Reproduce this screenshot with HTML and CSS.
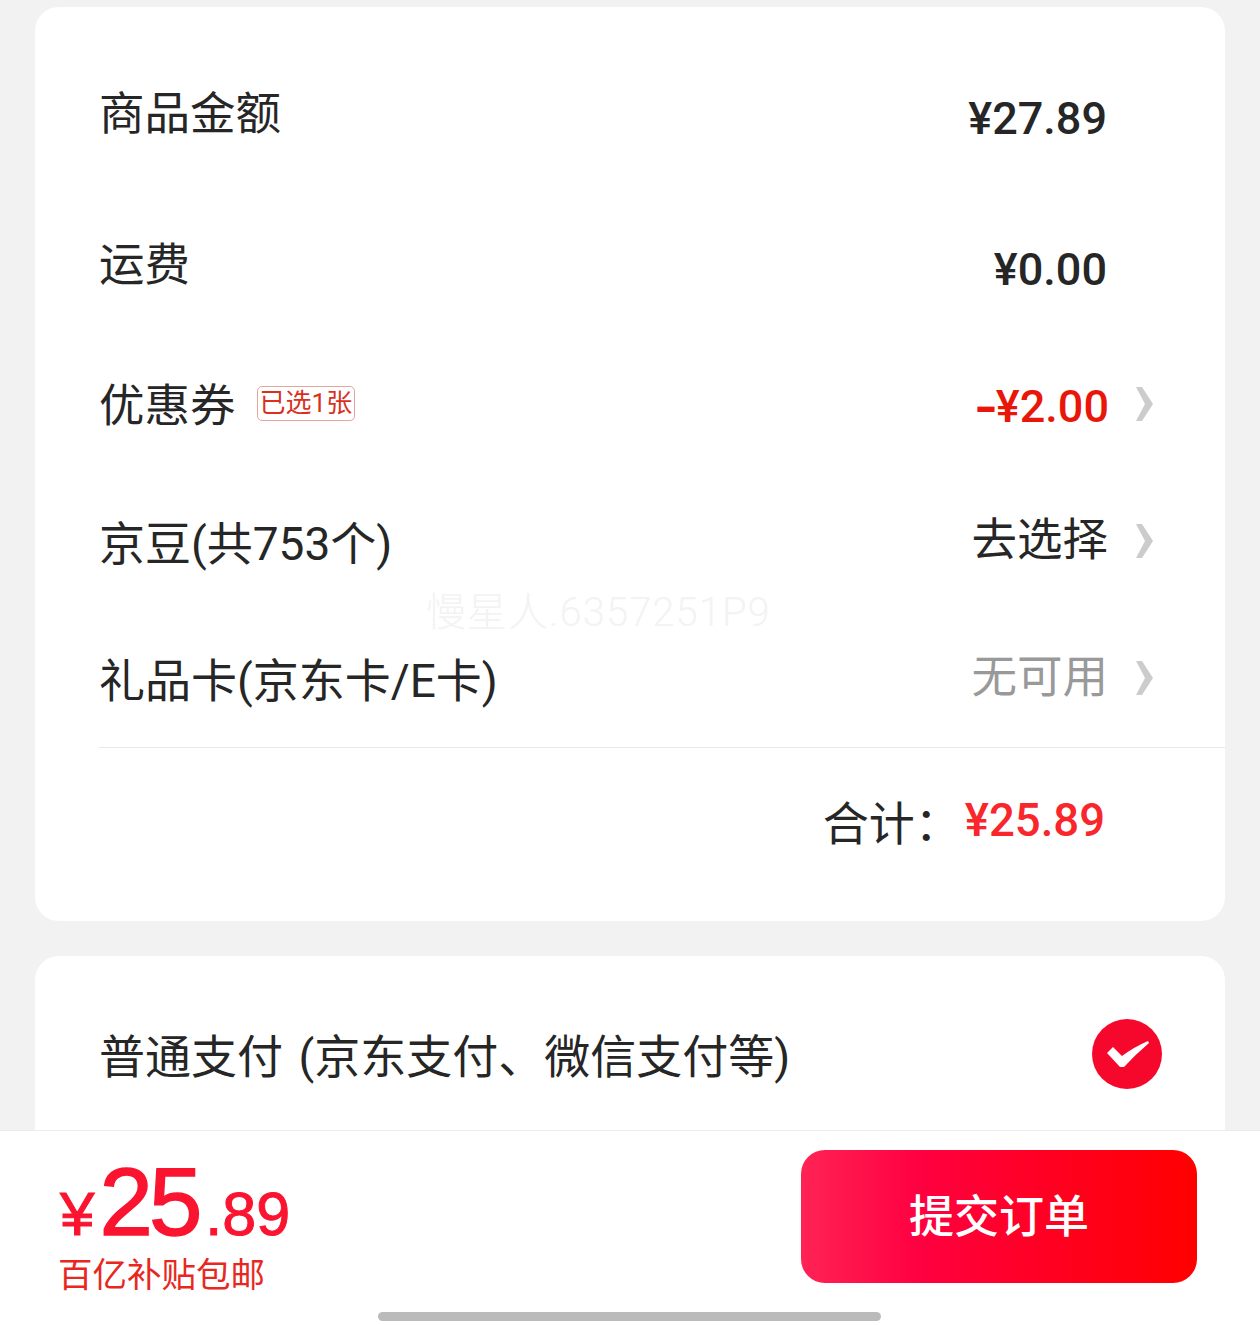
FILE: index.html
```html
<!DOCTYPE html>
<html lang="zh-CN">
<head>
    <meta charset="UTF-8">
    <meta name="viewport" content="width=device-width, initial-scale=1.0">
    <title>提交订单</title>
    <link rel="stylesheet" href="styles.css">
</head>
<body>

    <div class="page">
        <div class="content">
            <div class="card card-amount">
                <div class="row row-first row-plain">
                    <span class="label">商品金额</span>
                    <span class="value value-low">¥27.89</span>
                </div>
                <div class="row row-second row-plain">
                    <span class="label">运费</span>
                    <span class="value value-low">¥0.00</span>
                </div>
                <div class="row">
                    <span class="label">优惠券</span>
                    <span class="tag">已选1张</span>
                    <span class="value value-red"><span class="minus">-</span>¥2.00</span>
                    <svg class="chevron chevron-red" viewBox="0 0 17 34"><path d="M0 0H6L17 17L6 34H0L9 17Z"/></svg>
                </div>
                <div class="row">
                    <span class="label label-mixed">京豆(共753个)</span>
                    <span class="link">去选择</span>
                    <svg class="chevron" viewBox="0 0 17 34"><path d="M0 0H6L17 17L6 34H0L9 17Z"/></svg>
                </div>
                <div class="row">
                    <span class="label label-mixed">礼品卡(京东卡/E卡)</span>
                    <span class="link link-off">无可用</span>
                    <svg class="chevron" viewBox="0 0 17 34"><path d="M0 0H6L17 17L6 34H0L9 17Z"/></svg>
                </div>
                <div class="total">
                    <span class="total-label">合计：</span>
                    <span class="total-value">¥25.89</span>
                </div>
                <div class="watermark">慢星人.6357251P9</div>
            </div>

            <div class="card card-pay">
                <span class="label label-mixed label-pay">普通支付 (京东支付、微信支付等)</span>
                <svg class="check" viewBox="0 0 70 70">
                    <circle cx="35" cy="35" r="35" fill="#f5082c"/>
                    <path d="M15 34L21 28L30 37Q42 28 56 22L57 24Q44 35 32 48H28Z" fill="#fff"/>
                </svg>
            </div>
        </div>

        <div class="footer">
            <div class="price-box">
                <div class="price"><span class="price-sign">¥</span><span class="price-big">25</span><span class="price-small">.89</span></div>
                <div class="price-note">百亿补贴包邮</div>
            </div>
            <button class="submit"><span class="submit-text">提交订单</span></button>
            <div class="home-bar"></div>
        </div>
    </div>

</body>
</html>
```

FILE: styles.css
```css
body {
    margin: 0;
    font-family: Roboto, "Noto Sans CJK SC", sans-serif;
    background-color: #f2f2f2;
    color: #262626;
}
.page {
    width: 1260px;
    height: 1325px;
    display: flex;
    flex-direction: column;
    overflow: hidden;
}
.content {
    flex: 1;
    min-height: 0;
    overflow: hidden;
    padding: 7px 35px 0;
}
.card {
    background: #ffffff;
    border-radius: 24px;
}
.card-amount {
    position: relative;
    height: 914px;
    padding-left: 64px;
    box-sizing: border-box;
    padding-top: 39px;
}
.row {
    display: flex;
    align-items: center;
    height: 133px;
    padding-right: 72px;
}
.row + .row {
    margin-top: 4px;
}
.row-plain {
    padding-right: 118px;
}
.row-first {
    height: 138px;
}
.row + .row-second {
    height: 140px;
    margin-top: 12px;
}
.label {
    font-size: 45.5px;
    line-height: 60px;
    white-space: nowrap;
}
.label-mixed {
    font-size: 46px;
}
.label-pay {
    padding-top: 6px;
    word-spacing: 4px;
}
.value {
    margin-left: auto;
    font-size: 45px;
    font-weight: 500;
    line-height: 60px;
}
.value-low {
    padding-top: 8px;
}
.value-red {
    color: #e8170a;
}
.minus {
    font-size: 72px;
    font-weight: 400;
    line-height: 40px;
    vertical-align: -9px;
}
.tag {
    margin: 0 0 6px 21px;
    padding: 0 2px;
    border: 1px solid #e5a49c;
    border-radius: 5px;
    font-size: 26px;
    line-height: 33px;
    color: #d8321f;
}
.link {
    margin: 0 -1px 6px auto;
    font-size: 45.5px;
    line-height: 60px;
}
.link-off {
    color: #999999;
}
.chevron {
    width: 17px;
    height: 34px;
    margin: 0 0 6px 29px;
    fill: #cccccc;
}
.chevron-red {
    margin-left: 27px;
}
.total {
    display: flex;
    align-items: center;
    justify-content: flex-end;
    height: 150px;
    padding: 0 120px 5px 0;
    box-sizing: border-box;
    border-top: 1px solid #e8e8e8;
}
.total-label {
    margin-right: 4px;
    font-size: 46px;
}
.total-value {
    font-size: 45.5px;
    font-weight: 500;
    color: #f9262c;
}
.watermark {
    position: absolute;
    left: 391px;
    top: 581px;
    font-size: 40px;
    font-weight: 300;
    line-height: 50px;
    letter-spacing: 1px;
    color: #f3f3f3;
    white-space: nowrap;
}
.card-pay {
    display: flex;
    align-items: center;
    justify-content: space-between;
    margin-top: 35px;
    height: 196px;
    padding: 0 63px 0 64px;
}
.check {
    width: 70px;
    height: 70px;
}
.footer {
    position: relative;
    display: flex;
    justify-content: space-between;
    height: 195px;
    flex-shrink: 0;
    padding: 19px 63px 0 58px;
    box-sizing: border-box;
    background: #ffffff;
    border-top: 1px solid #ececec;
}
.price {
    display: flex;
    align-items: baseline;
    height: 103px;
    padding-left: 2px;
    color: #fa1430;
    font-family: "Liberation Sans", sans-serif;
}
.price-sign {
    margin-right: 5px;
    font-size: 62px;
    -webkit-text-stroke: 1px #fa1430;
}
.price-big {
    font-size: 96px;
    line-height: 104px;
    letter-spacing: -4px;
    -webkit-text-stroke: 1.5px #fa1430;
}
.price-small {
    margin-left: 7px;
    font-size: 61px;
    -webkit-text-stroke: 1px #fa1430;
}
.price-note {
    font-size: 34.5px;
    line-height: 44px;
    color: #e8281f;
}
.submit {
    width: 396px;
    height: 133px;
    border: none;
    border-radius: 24px;
    background: linear-gradient(to right, #ff2355, #ff0040 30%, #ff0000);
    color: #ffffff;
    font-family: inherit;
    font-size: 45px;
    font-weight: 500;
}
.submit-text {
    display: block;
    padding-bottom: 6px;
}
.home-bar {
    position: absolute;
    left: 378px;
    bottom: 4px;
    width: 503px;
    height: 9px;
    border-radius: 5px;
    background: #bbbbbb;
}
```
